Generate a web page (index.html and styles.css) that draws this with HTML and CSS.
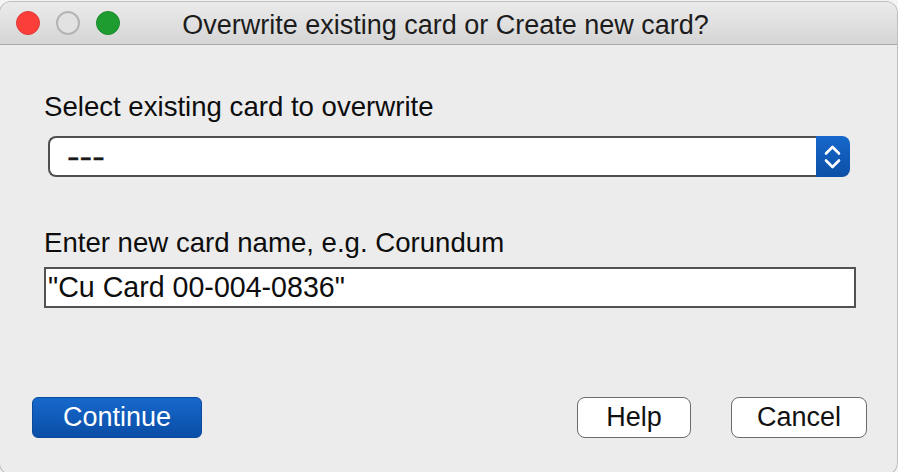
FILE: index.html
```html
<!DOCTYPE html>
<html>
<head>
<meta charset="utf-8">
<link rel="stylesheet" href="styles.css">
</head>
<body>
<div class="window">
  <div class="titlebar">
    <div class="lights">
      <span class="light red"></span>
      <span class="light gray"></span>
      <span class="light green"></span>
    </div>
    <div class="title">Overwrite existing card or Create new card?</div>
    <div class="spacer"></div>
  </div>
  <div class="content">
    <div class="label first">Select existing card to overwrite</div>
    <div class="select">
      <div class="select-value"><span class="dashes">---</span></div>
      <div class="stepper">
        <svg width="34" height="41" viewBox="0 0 34 41">
          <path d="M10 17.5 L16.5 11 L23 17.5" fill="none" stroke="#fff" stroke-width="2.6" stroke-linecap="round" stroke-linejoin="round"/>
          <path d="M10 24.5 L16.5 31 L23 24.5" fill="none" stroke="#fff" stroke-width="2.6" stroke-linecap="round" stroke-linejoin="round"/>
        </svg>
      </div>
    </div>
    <div class="label second">Enter new card name, e.g. Corundum</div>
    <div class="input">"Cu Card 00-004-0836"</div>
    <div class="buttons">
      <div class="btn primary">Continue</div>
      <div class="right">
        <div class="btn help">Help</div>
        <div class="btn cancel">Cancel</div>
      </div>
    </div>
  </div>
</div>
</body>
</html>
```

FILE: styles.css
```css
html, body {
  margin: 0;
  padding: 0;
}
body {
  width: 898px;
  height: 472px;
  background: #f4f4f4;
  overflow: hidden;
  font-family: "Liberation Sans", Arial, sans-serif;
  color: #111;
}
.window {
  width: 897px;
  height: 472px;
  margin-top: 2px;
  background: #ececec;
  border-radius: 11px;
  overflow: hidden;
  box-shadow: 0 0 0 1px rgba(0,0,0,0.22);
  box-sizing: border-box;
}
.titlebar {
  height: 42px;
  display: grid;
  grid-template-columns: 120px 1fr 120px;
  align-items: center;
  background: linear-gradient(#ebebeb, #d5d5d5);
  border-bottom: 1px solid #a9a9a9;
  border-radius: 11px 11px 0 0;
}
.lights {
  display: flex;
  gap: 16px;
  padding-left: 16px;
}
.light {
  width: 24px;
  height: 24px;
  border-radius: 50%;
  box-sizing: border-box;
}
.light.red {
  background: #fc3e3b;
  border: 1px solid #de3a36;
}
.light.gray {
  background: #e2e2e2;
  border: 2px solid #b4b4b4;
}
.light.green {
  background: #1f9c30;
  border: 1px solid #1a8a29;
}
.title {
  text-align: center;
  font-size: 27px;
  color: #1c1c1c;
  white-space: nowrap;
  line-height: 30px;
  padding-top: 3px;
  padding-right: 6px;
}
.content {
  padding: 47px 30px 0 32px;
  display: flex;
  flex-direction: column;
  align-items: flex-start;
}
.label {
  font-size: 27.6px;
  line-height: 30px;
  margin-left: 12px;
  white-space: nowrap;
  color: #0d0d0d;
}
.label.second {
  margin-top: 51px;
}
.select {
  margin-top: 14px;
  margin-left: 16px;
  width: 802px;
  height: 41px;
  display: flex;
}
.select-value {
  flex: 1;
  background: #fff;
  border: 2px solid #4f4f4f;
  border-right: none;
  border-radius: 8px 0 0 8px;
  display: flex;
  align-items: center;
  padding-left: 17px;
  font-size: 28px;
  color: #1a1a1a;
}
.dashes {
  display: inline-block;
  transform: scaleX(1.35);
  transform-origin: left center;
  -webkit-text-stroke: 0.4px #1a1a1a;
}
.stepper {
  width: 34px;
  height: 41px;
  background: linear-gradient(#1668cc, #0c4fa6);
  border-radius: 0 8px 8px 0;
}
.stepper svg {
  display: block;
}
.input {
  margin-top: 9px;
  margin-left: 12px;
  width: 812px;
  height: 41px;
  box-sizing: border-box;
  background: #fff;
  border: 2.5px solid #525252;
  font-size: 28.6px;
  line-height: 36px;
  padding-left: 2px;
  color: #0d0d0d;
}
.buttons {
  margin-top: 89px;
  width: 835px;
  display: flex;
  justify-content: space-between;
}
.right {
  display: flex;
  gap: 40px;
}
.btn {
  height: 41px;
  box-sizing: border-box;
  display: flex;
  align-items: center;
  justify-content: center;
  font-size: 27px;
  border-radius: 6px;
}
.btn.primary {
  width: 170px;
  color: #fff;
  background: linear-gradient(#1768cc, #0a4ea6);
  border: 1px solid #0a4a9c;
}
.btn.help, .btn.cancel {
  background: #fff;
  border: 1.5px solid #6c6c6c;
  border-radius: 8px;
  color: #111;
}
.btn.help {
  width: 114px;
}
.btn.cancel {
  width: 136px;
}
```
